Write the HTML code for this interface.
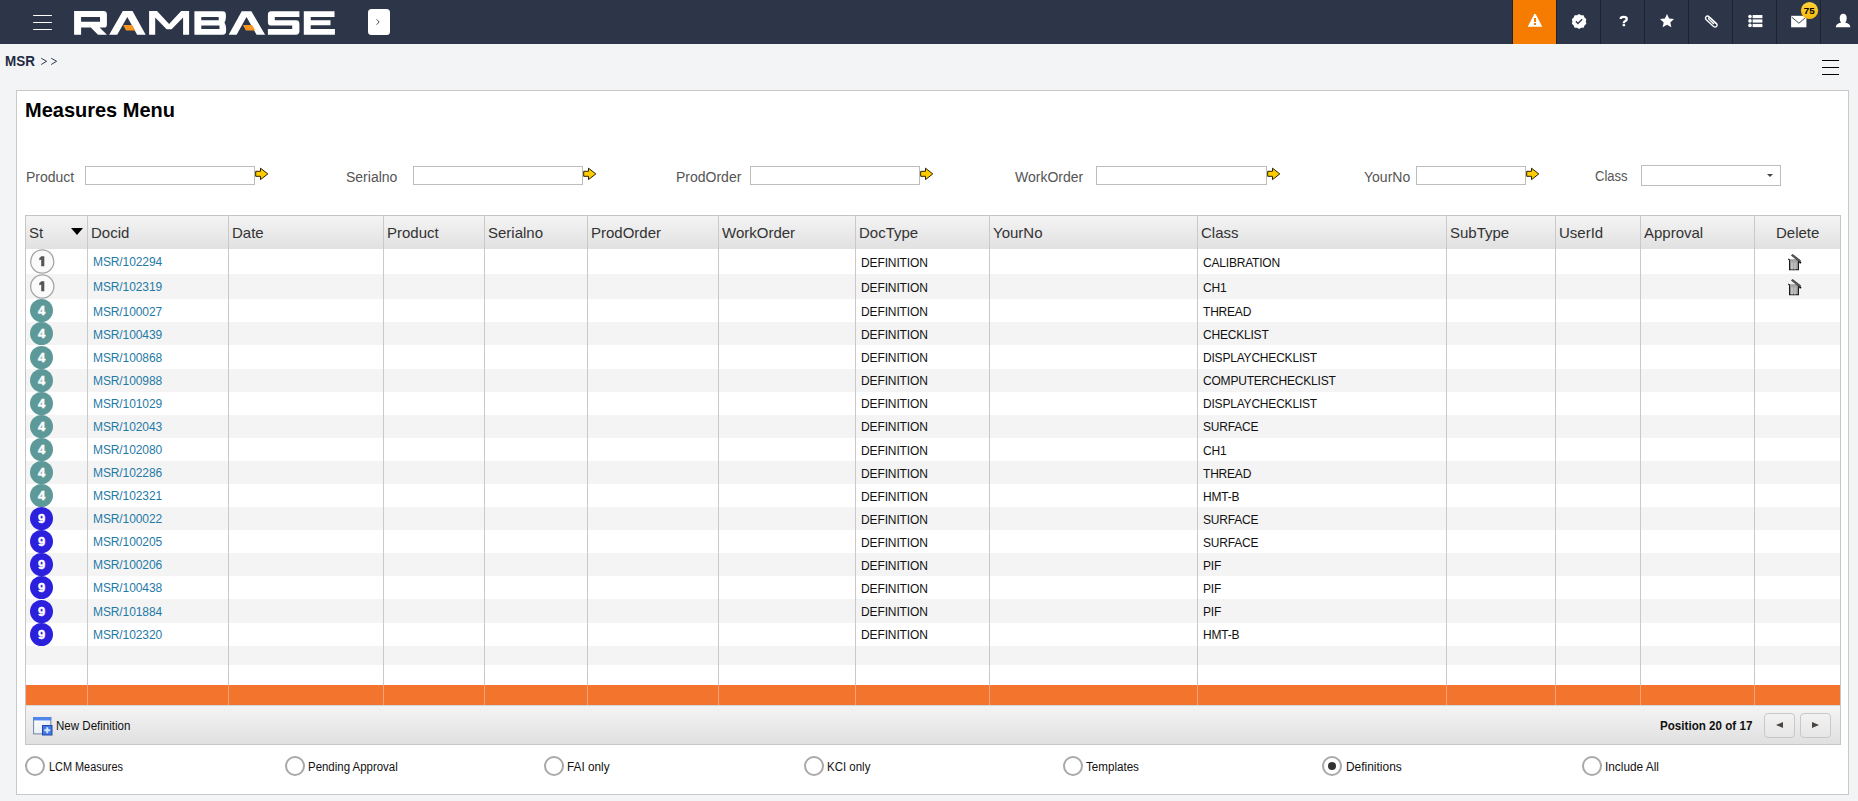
<!DOCTYPE html>
<html><head><meta charset="utf-8"><title>Measures Menu</title>
<style>
*{margin:0;padding:0;box-sizing:border-box}
html,body{width:1858px;height:801px;overflow:hidden;background:#f3f4f6;font-family:"Liberation Sans",sans-serif;position:relative}
.a{position:absolute}
.hdr{left:0;top:0;width:1858px;height:44px;background:#2d3649}
.hc{top:0;width:44px;height:44px;border-left:1px solid #1d2331}
.panel{left:16px;top:90px;width:1833px;height:705px;background:#fff;border:1px solid #c9c9c9}
.lbl{font-size:14px;color:#555;top:169px;line-height:16px}
.inp{top:166px;height:19px;width:170px;border:1px solid #bdbdbd;background:#fff}
.th{top:215px;height:34px;background:linear-gradient(#f4f4f4,#e1e1e1);border-top:1px solid #c3c3c3}
.ht{top:224px;font-size:15px;color:#333;line-height:17px}
.vl{width:1px;background:#c9c9c9}
.row{left:25px;width:1816px}
.alt{background:#f4f4f4}
.cell{font-size:12px;line-height:14px}
.lnk{color:#1f7aa6}
.blk{color:#111}
.st{left:30px;width:23px;height:23px;border-radius:50%;color:#fff;font-weight:bold;font-size:13px;text-align:center;line-height:24px;-webkit-text-stroke:0.45px #fff}
.radio{top:756px;width:20px;height:20px;border-radius:50%;border:2px solid #a9a9a9;background:#fff}
.rl{top:760px;font-size:12.5px;color:#111;line-height:14px;transform:scaleX(0.875);transform-origin:left}
.nb{top:713px;width:31px;height:25px;border:1px solid #c8c8c8;border-radius:4px;background:linear-gradient(#f2f2f2,#e6e6e6)}
</style></head><body>

<div class="a hdr"></div>
<div class="a" style="left:33px;top:15px;width:19px;height:1.4px;background:#fff;border-radius:0.7px"></div>
<div class="a" style="left:33px;top:22px;width:19px;height:1.4px;background:#fff;border-radius:0.7px"></div>
<div class="a" style="left:33px;top:29px;width:19px;height:1.4px;background:#fff;border-radius:0.7px"></div>
<svg class="a" style="left:0;top:0" width="400" height="44" viewBox="0 0 400 44">
<g fill="#fff">
<path d="M74.1,11.1 H103.5 Q106.9,11.1 106.9,14.5 V24.4 Q106.9,27.6 103.7,27.6 H99.6 L106.9,34.8 H98 L90.8,27.6 H81.1 V34.8 H74.1 Z M81.1,17 V21.8 H100 V17 Z" fill-rule="evenodd"/>
<path d="M109.2,34.8 L122.8,11.1 H132.5 L145.7,34.8 H137.1 L127.3,17.1 L117.2,34.8 Z"/>
<path d="M149.1,34.8 V11.1 H157 L169.1,24 L181.2,11.1 H189.1 V34.8 H183.1 V17.5 L171.6,29.2 H166.6 L155.2,17.5 V34.8 Z"/>
<path d="M194.4,11.3 H222.5 Q225.9,11.3 225.9,14.7 V17.5 Q225.9,19.8 224.5,22.8 Q226.1,25.3 226.1,27.9 V31.3 Q226.1,34.7 222.7,34.7 H194.4 Z M201.3,17.1 V20.3 H218.7 V17.1 Z M201.3,25.6 V29.1 H219.5 V25.6 Z" fill-rule="evenodd"/>
<path d="M228.7,34.7 L241.7,11.3 H251.4 L265.1,34.7 H256.6 L246.5,17.1 L236.6,34.7 Z"/>
<path d="M271.3,11.3 H299.4 V17.1 H274.8 V20.3 H296 Q299.4,20.3 299.4,23.7 V31.3 Q299.4,34.7 296,34.7 H267.9 V29.1 H292.2 V25.6 H271.3 Q267.9,25.6 267.9,22.2 V14.7 Q267.9,11.3 271.3,11.3 Z"/>
<path d="M303.8,11.3 H334.5 V17.1 H310.7 V20.3 H330.5 V25.2 H310.7 V29.1 H334.9 V34.7 H303.8 Z"/>
</g>
<g fill="#f7931e">
<path d="M123.1,25 H131.9 L135.2,30.6 H126.1 Z"/>
<path d="M242.9,25 H252 L255.2,30.4 H245.9 Z"/>
</g>
<rect x="368" y="9" width="22" height="26" rx="3.5" fill="#fff"/>
<path d="M376.6,19.3 L379.2,22 L376.6,24.7" stroke="#3a3f4f" stroke-width="0.95" fill="none"/>
</svg>
<div class="a" style="left:1512px;top:0;width:44px;height:44px;background:#f57c00;border-left:1px solid #1d2331"></div>
<div class="a hc" style="left:1556px"></div>
<div class="a hc" style="left:1600px"></div>
<div class="a hc" style="left:1644px"></div>
<div class="a hc" style="left:1688px"></div>
<div class="a hc" style="left:1732px"></div>
<div class="a hc" style="left:1776px"></div>
<div class="a hc" style="left:1820px"></div>
<svg class="a" style="left:1500px;top:0" width="358" height="44" viewBox="1500 0 358 44">
<g fill="#fff">
<path d="M1534.2,14.2 Q1535,13.2 1535.8,14.2 L1542.3,26.8 H1527.7 Z"/>
</g>
<rect x="1534" y="18" width="2" height="4" fill="#f57c00"/>
<rect x="1534" y="23" width="2" height="2" fill="#f57c00"/>
<path fill="#fff" d="M1579.10,13.90 L1581.17,15.13 L1583.57,15.35 L1584.52,17.56 L1586.33,19.15 L1585.80,21.50 L1586.33,23.85 L1584.52,25.44 L1583.57,27.65 L1581.17,27.87 L1579.10,29.10 L1577.03,27.87 L1574.63,27.65 L1573.68,25.44 L1571.87,23.85 L1572.40,21.50 L1571.87,19.15 L1573.68,17.56 L1574.63,15.35 L1577.03,15.13 Z"/>
<path d="M1575.9,21.3 L1577.9,23.5 L1582.2,19.2" stroke="#2d3649" stroke-width="1.3" fill="none"/>
<path d="M1620.7,18.9 Q1620.7,16.9 1623.6,16.9 Q1626.8,16.9 1626.8,19 Q1626.8,20.4 1625,21.2 Q1623.8,21.8 1623.8,22.9 V23.3" stroke="#fff" stroke-width="2.3" fill="none"/><rect x="1622.6" y="24.1" width="2.5" height="2.1" fill="#fff"/>
<path fill="#fff" d="M1667,14 L1669.1,18.6 L1674,19.1 L1670.3,22.4 L1671.4,27.2 L1667,24.7 L1662.6,27.2 L1663.7,22.4 L1660,19.1 L1664.9,18.6 Z"/>
<path d="M1715.9,23.6 L1709.3,17 Q1707.6,15.3 1706.1,16.6 Q1704.7,18 1706.3,19.7 L1713.3,26.3 Q1715.2,27.9 1716.6,26.4 Q1717.9,25 1716.2,23.3 L1710.6,17.9 Q1709.6,17 1708.9,17.7 Q1708.2,18.5 1709.2,19.4 L1713.9,24" stroke="#fff" stroke-width="1.3" fill="none"/>
<g fill="#fff">
<circle cx="1750" cy="16.6" r="1.8"/><rect x="1752.6" y="15" width="9.8" height="3.2"/>
<circle cx="1750" cy="20.9" r="1.8"/><rect x="1752.6" y="19.4" width="9.8" height="3.2"/>
<circle cx="1750" cy="25.4" r="1.8"/><rect x="1752.6" y="23.9" width="9.8" height="3.2"/>
<path d="M1791.1,15.8 H1806.4 V27.3 H1791.1 Z"/>
</g>
<path d="M1791.6,17 L1798.9,23.2 L1806.2,17" stroke="#2d3649" stroke-width="0.9" fill="none"/>
<defs><linearGradient id="bg75" x1="0" y1="0" x2="0" y2="1"><stop offset="0" stop-color="#ffd23a"/><stop offset="1" stop-color="#f7b90c"/></linearGradient></defs><circle cx="1809.5" cy="10.5" r="8.6" fill="url(#bg75)"/>
<text x="1809.3" y="14.1" font-family="Liberation Sans" font-weight="bold" font-size="9.8" fill="#000" text-anchor="middle">75</text>
<path fill="#fff" d="M1843.2,13.8 Q1846.7,13.8 1846.7,18.3 Q1846.7,21.3 1845.2,22.6 Q1850.3,24 1850.3,27.2 H1835.8 Q1835.8,24 1841.2,22.6 Q1839.7,21.3 1839.7,18.3 Q1839.7,13.8 1843.2,13.8 Z"/>
</svg>
<div class="a" style="left:5px;top:53px;font-size:14px;font-weight:bold;color:#1f2a44;line-height:16px;transform:scaleX(0.96);transform-origin:left">MSR</div>
<svg class="a" style="left:40px;top:56px" width="20" height="12" viewBox="0 0 20 12"><path d="M1.2,2.2 L6.6,5.3 L1.2,8.5 M11.2,2.2 L16.6,5.3 L11.2,8.5" stroke="#27324c" stroke-width="0.95" fill="none"/></svg>
<div class="a" style="left:1822px;top:60px;width:17px;height:1.3px;background:#000"></div>
<div class="a" style="left:1822px;top:67px;width:17px;height:1.3px;background:#000"></div>
<div class="a" style="left:1822px;top:74px;width:17px;height:1.3px;background:#000"></div>
<div class="a panel"></div>
<div class="a" style="left:25px;top:97.5px;font-size:21px;font-weight:bold;color:#000;line-height:24px;transform:scaleX(0.952);transform-origin:left">Measures Menu</div>
<div class="a lbl" style="left:26px">Product</div>
<div class="a inp" style="left:85px;width:170px"></div>
<svg class="a" style="left:255px;top:167px" width="14" height="14" viewBox="0 0 14 14"><path d="M0.7,4.3 H5.5 V1.2 L12.8,6.9 L5.5,12.6 V9.3 H0.7 Z" fill="#ffcc00" stroke="#2b2100" stroke-width="1"/></svg>
<div class="a lbl" style="left:346px">Serialno</div>
<div class="a inp" style="left:413px;width:170px"></div>
<svg class="a" style="left:583px;top:167px" width="14" height="14" viewBox="0 0 14 14"><path d="M0.7,4.3 H5.5 V1.2 L12.8,6.9 L5.5,12.6 V9.3 H0.7 Z" fill="#ffcc00" stroke="#2b2100" stroke-width="1"/></svg>
<div class="a lbl" style="left:676px">ProdOrder</div>
<div class="a inp" style="left:750px;width:170px"></div>
<svg class="a" style="left:920px;top:167px" width="14" height="14" viewBox="0 0 14 14"><path d="M0.7,4.3 H5.5 V1.2 L12.8,6.9 L5.5,12.6 V9.3 H0.7 Z" fill="#ffcc00" stroke="#2b2100" stroke-width="1"/></svg>
<div class="a lbl" style="left:1015px">WorkOrder</div>
<div class="a inp" style="left:1096px;width:171px"></div>
<svg class="a" style="left:1267px;top:167px" width="14" height="14" viewBox="0 0 14 14"><path d="M0.7,4.3 H5.5 V1.2 L12.8,6.9 L5.5,12.6 V9.3 H0.7 Z" fill="#ffcc00" stroke="#2b2100" stroke-width="1"/></svg>
<div class="a lbl" style="left:1364px">YourNo</div>
<div class="a inp" style="left:1416px;width:110px"></div>
<svg class="a" style="left:1526px;top:167px" width="14" height="14" viewBox="0 0 14 14"><path d="M0.7,4.3 H5.5 V1.2 L12.8,6.9 L5.5,12.6 V9.3 H0.7 Z" fill="#ffcc00" stroke="#2b2100" stroke-width="1"/></svg>
<div class="a lbl" style="left:1595px;top:167.5px;transform:scaleX(0.93);transform-origin:left">Class</div>
<div class="a inp" style="left:1641px;top:165px;width:140px;height:21px"></div>
<div class="a" style="left:1767px;top:174px;width:0;height:0;border-left:3.5px solid transparent;border-right:3.5px solid transparent;border-top:3.5px solid #444"></div>
<div class="a th" style="left:25px;width:1816px"></div>
<div class="a row alt" style="top:274px;height:25px"></div>
<div class="a row alt" style="top:322px;height:23px"></div>
<div class="a row alt" style="top:369px;height:23px"></div>
<div class="a row alt" style="top:415px;height:23px"></div>
<div class="a row alt" style="top:461px;height:23px"></div>
<div class="a row alt" style="top:507px;height:23px"></div>
<div class="a row alt" style="top:553px;height:23px"></div>
<div class="a row alt" style="top:599px;height:24px"></div>
<div class="a row alt" style="top:646px;height:19px"></div>
<div class="a" style="left:25px;top:685px;width:1816px;height:20px;background:#f3752d"></div>
<div class="a vl" style="left:25px;top:215px;height:490px;background:#c6c6c6"></div>
<div class="a vl" style="left:1840px;top:215px;height:490px;background:#c6c6c6"></div>
<div class="a vl" style="left:87px;top:215px;height:470px"></div>
<div class="a vl" style="left:87px;top:685px;height:20px;background:#f7a27a"></div>
<div class="a vl" style="left:228px;top:215px;height:470px"></div>
<div class="a vl" style="left:228px;top:685px;height:20px;background:#f7a27a"></div>
<div class="a vl" style="left:383px;top:215px;height:470px"></div>
<div class="a vl" style="left:383px;top:685px;height:20px;background:#f7a27a"></div>
<div class="a vl" style="left:484px;top:215px;height:470px"></div>
<div class="a vl" style="left:484px;top:685px;height:20px;background:#f7a27a"></div>
<div class="a vl" style="left:587px;top:215px;height:470px"></div>
<div class="a vl" style="left:587px;top:685px;height:20px;background:#f7a27a"></div>
<div class="a vl" style="left:718px;top:215px;height:470px"></div>
<div class="a vl" style="left:718px;top:685px;height:20px;background:#f7a27a"></div>
<div class="a vl" style="left:855px;top:215px;height:470px"></div>
<div class="a vl" style="left:855px;top:685px;height:20px;background:#f7a27a"></div>
<div class="a vl" style="left:989px;top:215px;height:470px"></div>
<div class="a vl" style="left:989px;top:685px;height:20px;background:#f7a27a"></div>
<div class="a vl" style="left:1197px;top:215px;height:470px"></div>
<div class="a vl" style="left:1197px;top:685px;height:20px;background:#f7a27a"></div>
<div class="a vl" style="left:1446px;top:215px;height:470px"></div>
<div class="a vl" style="left:1446px;top:685px;height:20px;background:#f7a27a"></div>
<div class="a vl" style="left:1555px;top:215px;height:470px"></div>
<div class="a vl" style="left:1555px;top:685px;height:20px;background:#f7a27a"></div>
<div class="a vl" style="left:1640px;top:215px;height:470px"></div>
<div class="a vl" style="left:1640px;top:685px;height:20px;background:#f7a27a"></div>
<div class="a vl" style="left:1754px;top:215px;height:470px"></div>
<div class="a vl" style="left:1754px;top:685px;height:20px;background:#f7a27a"></div>
<div class="a ht" style="left:29px">St</div>
<div class="a ht" style="left:91px">Docid</div>
<div class="a ht" style="left:232px">Date</div>
<div class="a ht" style="left:387px">Product</div>
<div class="a ht" style="left:488px">Serialno</div>
<div class="a ht" style="left:591px">ProdOrder</div>
<div class="a ht" style="left:722px">WorkOrder</div>
<div class="a ht" style="left:859px">DocType</div>
<div class="a ht" style="left:993px">YourNo</div>
<div class="a ht" style="left:1201px">Class</div>
<div class="a ht" style="left:1450px">SubType</div>
<div class="a ht" style="left:1559px">UserId</div>
<div class="a ht" style="left:1644px">Approval</div>
<div class="a ht" style="left:1776px">Delete</div>
<div class="a" style="left:70.5px;top:228px;width:0;height:0;border-left:6.2px solid transparent;border-right:6.2px solid transparent;border-top:7px solid #000"></div>
<svg class="a" style="left:29px;top:248.0px" width="27" height="27" viewBox="0 0 27 27"><circle cx="13.25" cy="13.5" r="11.6" fill="#fafafa" stroke="#a5a5a5" stroke-width="1.3"/><path d="M12.2,8.2 H15.3 V18.2 H12.2 V11.4 Q11.2,12 10.3,12.2 V10 Q11.6,9.4 12.2,8.2 Z" fill="#555"/></svg>
<div class="a cell lnk" style="left:93px;top:254.5px;letter-spacing:-0.1px">MSR/102294</div>
<div class="a cell blk" style="left:861px;top:255.5px;letter-spacing:-0.12px">DEFINITION</div>
<div class="a cell blk" style="left:1203px;top:255.5px;letter-spacing:-0.2px">CALIBRATION</div>
<svg class="a" style="left:1784px;top:251px" width="20" height="22" viewBox="0 0 20 22"><rect x="5.6" y="8.3" width="8.8" height="10.5" fill="#a9a9a9"/><path d="M5.6,8.6 V18.8 H14.4 V9.5" fill="none" stroke="#111" stroke-width="1.1"/><rect x="7.3" y="11.5" width="1.3" height="7" fill="#cfcfcf"/><rect x="10.3" y="11.5" width="1.3" height="7" fill="#c4c4c4"/><rect x="6.2" y="8.4" width="7.6" height="2.6" fill="#a4a4a4"/><path d="M4.2,7.8 L5.8,9.3" stroke="#222" stroke-width="1.1"/><path d="M7,4.6 L8.6,3 L17,9.6 L15.6,11.6 Z" fill="#3a3a3a"/><path d="M8.5,4.5 L15.8,10" stroke="#8a8a8a" stroke-width="0.6"/><circle cx="16.3" cy="11.5" r="1.1" fill="#000"/></svg>
<svg class="a" style="left:29px;top:273.0px" width="27" height="27" viewBox="0 0 27 27"><circle cx="13.25" cy="13.5" r="11.6" fill="#fafafa" stroke="#a5a5a5" stroke-width="1.3"/><path d="M12.2,8.2 H15.3 V18.2 H12.2 V11.4 Q11.2,12 10.3,12.2 V10 Q11.6,9.4 12.2,8.2 Z" fill="#555"/></svg>
<div class="a cell lnk" style="left:93px;top:279.5px;letter-spacing:-0.1px">MSR/102319</div>
<div class="a cell blk" style="left:861px;top:280.5px;letter-spacing:-0.12px">DEFINITION</div>
<div class="a cell blk" style="left:1203px;top:280.5px;letter-spacing:-0.2px">CH1</div>
<svg class="a" style="left:1784px;top:276px" width="20" height="22" viewBox="0 0 20 22"><rect x="5.6" y="8.3" width="8.8" height="10.5" fill="#a9a9a9"/><path d="M5.6,8.6 V18.8 H14.4 V9.5" fill="none" stroke="#111" stroke-width="1.1"/><rect x="7.3" y="11.5" width="1.3" height="7" fill="#cfcfcf"/><rect x="10.3" y="11.5" width="1.3" height="7" fill="#c4c4c4"/><rect x="6.2" y="8.4" width="7.6" height="2.6" fill="#a4a4a4"/><path d="M4.2,7.8 L5.8,9.3" stroke="#222" stroke-width="1.1"/><path d="M7,4.6 L8.6,3 L17,9.6 L15.6,11.6 Z" fill="#3a3a3a"/><path d="M8.5,4.5 L15.8,10" stroke="#8a8a8a" stroke-width="0.6"/><circle cx="16.3" cy="11.5" r="1.1" fill="#000"/></svg>
<div class="a st" style="top:299.0px;background:#5e9999">4</div>
<div class="a cell lnk" style="left:93px;top:304.5px;letter-spacing:-0.1px">MSR/100027</div>
<div class="a cell blk" style="left:861px;top:304.5px;letter-spacing:-0.12px">DEFINITION</div>
<div class="a cell blk" style="left:1203px;top:304.5px;letter-spacing:-0.2px">THREAD</div>
<div class="a st" style="top:322.0px;background:#5e9999">4</div>
<div class="a cell lnk" style="left:93px;top:327.5px;letter-spacing:-0.1px">MSR/100439</div>
<div class="a cell blk" style="left:861px;top:327.5px;letter-spacing:-0.12px">DEFINITION</div>
<div class="a cell blk" style="left:1203px;top:327.5px;letter-spacing:-0.2px">CHECKLIST</div>
<div class="a st" style="top:345.5px;background:#5e9999">4</div>
<div class="a cell lnk" style="left:93px;top:350.5px;letter-spacing:-0.1px">MSR/100868</div>
<div class="a cell blk" style="left:861px;top:350.5px;letter-spacing:-0.12px">DEFINITION</div>
<div class="a cell blk" style="left:1203px;top:350.5px;letter-spacing:-0.2px">DISPLAYCHECKLIST</div>
<div class="a st" style="top:369.0px;background:#5e9999">4</div>
<div class="a cell lnk" style="left:93px;top:373.5px;letter-spacing:-0.1px">MSR/100988</div>
<div class="a cell blk" style="left:861px;top:373.5px;letter-spacing:-0.12px">DEFINITION</div>
<div class="a cell blk" style="left:1203px;top:373.5px;letter-spacing:-0.2px">COMPUTERCHECKLIST</div>
<div class="a st" style="top:392.0px;background:#5e9999">4</div>
<div class="a cell lnk" style="left:93px;top:396.5px;letter-spacing:-0.1px">MSR/101029</div>
<div class="a cell blk" style="left:861px;top:396.5px;letter-spacing:-0.12px">DEFINITION</div>
<div class="a cell blk" style="left:1203px;top:396.5px;letter-spacing:-0.2px">DISPLAYCHECKLIST</div>
<div class="a st" style="top:415.0px;background:#5e9999">4</div>
<div class="a cell lnk" style="left:93px;top:419.5px;letter-spacing:-0.1px">MSR/102043</div>
<div class="a cell blk" style="left:861px;top:419.5px;letter-spacing:-0.12px">DEFINITION</div>
<div class="a cell blk" style="left:1203px;top:419.5px;letter-spacing:-0.2px">SURFACE</div>
<div class="a st" style="top:438.0px;background:#5e9999">4</div>
<div class="a cell lnk" style="left:93px;top:442.5px;letter-spacing:-0.1px">MSR/102080</div>
<div class="a cell blk" style="left:861px;top:443.5px;letter-spacing:-0.12px">DEFINITION</div>
<div class="a cell blk" style="left:1203px;top:443.5px;letter-spacing:-0.2px">CH1</div>
<div class="a st" style="top:461.0px;background:#5e9999">4</div>
<div class="a cell lnk" style="left:93px;top:465.5px;letter-spacing:-0.1px">MSR/102286</div>
<div class="a cell blk" style="left:861px;top:466.5px;letter-spacing:-0.12px">DEFINITION</div>
<div class="a cell blk" style="left:1203px;top:466.5px;letter-spacing:-0.2px">THREAD</div>
<div class="a st" style="top:484.0px;background:#5e9999">4</div>
<div class="a cell lnk" style="left:93px;top:488.5px;letter-spacing:-0.1px">MSR/102321</div>
<div class="a cell blk" style="left:861px;top:489.5px;letter-spacing:-0.12px">DEFINITION</div>
<div class="a cell blk" style="left:1203px;top:489.5px;letter-spacing:-0.2px">HMT-B</div>
<div class="a st" style="top:507.0px;background:#2b20dc">9</div>
<div class="a cell lnk" style="left:93px;top:511.5px;letter-spacing:-0.1px">MSR/100022</div>
<div class="a cell blk" style="left:861px;top:512.5px;letter-spacing:-0.12px">DEFINITION</div>
<div class="a cell blk" style="left:1203px;top:512.5px;letter-spacing:-0.2px">SURFACE</div>
<div class="a st" style="top:530.0px;background:#2b20dc">9</div>
<div class="a cell lnk" style="left:93px;top:534.5px;letter-spacing:-0.1px">MSR/100205</div>
<div class="a cell blk" style="left:861px;top:535.5px;letter-spacing:-0.12px">DEFINITION</div>
<div class="a cell blk" style="left:1203px;top:535.5px;letter-spacing:-0.2px">SURFACE</div>
<div class="a st" style="top:553.0px;background:#2b20dc">9</div>
<div class="a cell lnk" style="left:93px;top:557.5px;letter-spacing:-0.1px">MSR/100206</div>
<div class="a cell blk" style="left:861px;top:558.5px;letter-spacing:-0.12px">DEFINITION</div>
<div class="a cell blk" style="left:1203px;top:558.5px;letter-spacing:-0.2px">PIF</div>
<div class="a st" style="top:576.0px;background:#2b20dc">9</div>
<div class="a cell lnk" style="left:93px;top:580.5px;letter-spacing:-0.1px">MSR/100438</div>
<div class="a cell blk" style="left:861px;top:581.5px;letter-spacing:-0.12px">DEFINITION</div>
<div class="a cell blk" style="left:1203px;top:581.5px;letter-spacing:-0.2px">PIF</div>
<div class="a st" style="top:599.5px;background:#2b20dc">9</div>
<div class="a cell lnk" style="left:93px;top:604.5px;letter-spacing:-0.1px">MSR/101884</div>
<div class="a cell blk" style="left:861px;top:604.5px;letter-spacing:-0.12px">DEFINITION</div>
<div class="a cell blk" style="left:1203px;top:604.5px;letter-spacing:-0.2px">PIF</div>
<div class="a st" style="top:623.0px;background:#2b20dc">9</div>
<div class="a cell lnk" style="left:93px;top:627.5px;letter-spacing:-0.1px">MSR/102320</div>
<div class="a cell blk" style="left:861px;top:627.5px;letter-spacing:-0.12px">DEFINITION</div>
<div class="a cell blk" style="left:1203px;top:627.5px;letter-spacing:-0.2px">HMT-B</div>
<div class="a" style="left:25px;top:705px;width:1816px;height:40px;background:linear-gradient(#f4f4f4,#e0e0e0);border:1px solid #c6c6c6;border-top:1px solid #d3d7dc"></div>
<svg class="a" style="left:32px;top:716px" width="22" height="20" viewBox="0 0 22 20">
<defs><linearGradient id="nbg" x1="0" y1="0" x2="1" y2="1"><stop offset="0" stop-color="#fff"/><stop offset="1" stop-color="#dfe6f2"/></linearGradient></defs>
<rect x="1.6" y="1.5" width="17.2" height="16.4" fill="url(#nbg)" stroke="#6f84a4" stroke-width="1"/>
<rect x="1.1" y="1" width="18.2" height="3.4" fill="#4f86ea"/>
<rect x="10.5" y="9.5" width="9.5" height="9.5" fill="#4279e0" stroke="#2747a8" stroke-width="1"/>
<path d="M15.25,11.3 V17.2 M12.3,14.25 H18.2" stroke="#d6e4ff" stroke-width="1.9"/>
</svg>
<div class="a" style="left:56px;top:718.5px;font-size:12.5px;color:#111;line-height:14px;transform:scaleX(0.924);transform-origin:left">New Definition</div>
<div class="a" style="left:1660px;top:718.5px;font-size:12.5px;font-weight:bold;color:#111;line-height:14px;transform:scaleX(0.93);transform-origin:left">Position 20 of 17</div>
<div class="a nb" style="left:1764px"></div><div class="a nb" style="left:1800px"></div>
<div class="a" style="left:1776.3px;top:722.4px;width:0;height:0;border-top:3.9px solid transparent;border-bottom:3.9px solid transparent;border-right:7px solid #4a4540"></div>
<div class="a" style="left:1811.8px;top:722.4px;width:0;height:0;border-top:3.9px solid transparent;border-bottom:3.9px solid transparent;border-left:7px solid #4a4540"></div>
<div class="a radio" style="left:25.4px"></div>
<div class="a rl" style="left:48.9px;transform:scaleX(0.872)">LCM Measures</div>
<div class="a radio" style="left:284.6px"></div>
<div class="a rl" style="left:308.1px;transform:scaleX(0.916)">Pending Approval</div>
<div class="a radio" style="left:543.7px"></div>
<div class="a rl" style="left:567.2px;transform:scaleX(0.942)">FAI only</div>
<div class="a radio" style="left:803.7px"></div>
<div class="a rl" style="left:827.2px;transform:scaleX(0.918)">KCI only</div>
<div class="a radio" style="left:1062.9px"></div>
<div class="a rl" style="left:1086.4px;transform:scaleX(0.929)">Templates</div>
<div class="a radio" style="left:1322.3px"></div>
<div class="a" style="left:1328.3px;top:762px;width:8px;height:8px;border-radius:50%;background:#333"></div>
<div class="a rl" style="left:1345.8px;transform:scaleX(0.955)">Definitions</div>
<div class="a radio" style="left:1581.9px"></div>
<div class="a rl" style="left:1605.4px;transform:scaleX(0.946)">Include All</div>
</body></html>
